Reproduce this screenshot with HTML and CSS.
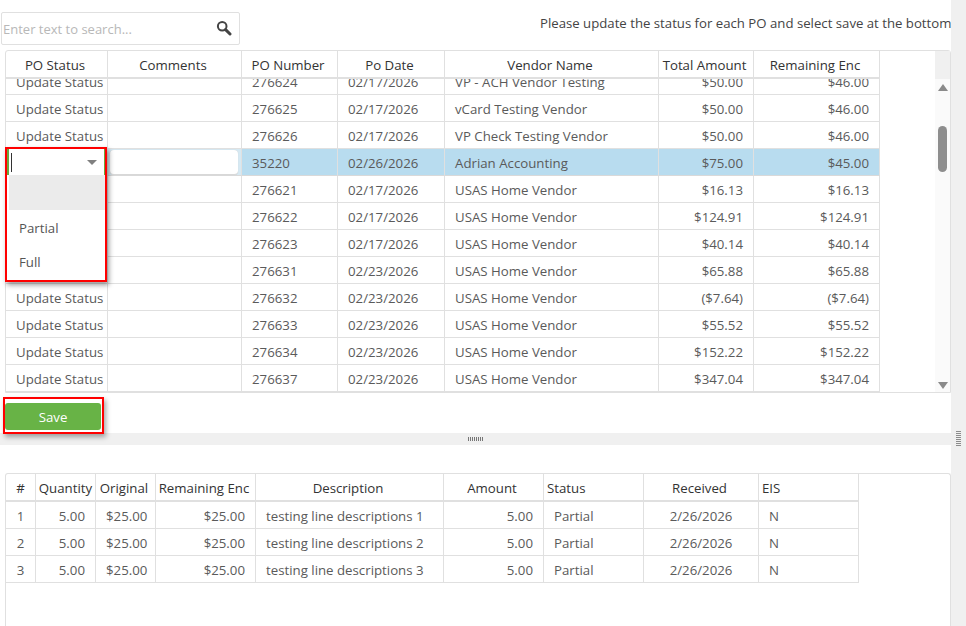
FILE: index.html
```html
<!DOCTYPE html>
<html lang="en">
<head>
<meta charset="utf-8">
<title>PO Status</title>
<link rel="stylesheet" href="styles.css">
</head>
<body>
<div class="page">
  <main class="main">
    <div class="toolbar">
      <div class="search">
        <span class="search-text">Enter text to search...</span>
        <svg class="search-icon" width="16" height="16" viewBox="0 0 16 16"><circle cx="6.2" cy="6.2" r="4.3" fill="none" stroke="#444" stroke-width="2"/><path d="M9.6 9.6 L14 14" stroke="#444" stroke-width="3" stroke-linecap="round"/></svg>
      </div>
      <div class="notice">Please update the status for each PO and select save at the bottom</div>
    </div>

    <div class="grid upper">
      <div class="grid-inner">
        <table class="tbl head po">
          <colgroup><col class="p1"><col class="p2"><col class="p3"><col class="p4"><col class="p5"><col class="p6"><col class="p7"></colgroup>
          <tr><th>PO Status</th><th>Comments</th><th>PO Number</th><th>Po Date</th><th>Vendor Name</th><th>Total Amount</th><th>Remaining Enc</th></tr>
        </table>
        <div class="body-clip">
          <table class="tbl po scrolled">
            <colgroup><col class="p1"><col class="p2"><col class="p3"><col class="p4"><col class="p5"><col class="p6"><col class="p7"></colgroup>
            <tr><td>Update Status</td><td></td><td>276624</td><td>02/17/2026</td><td>VP - ACH Vendor Testing</td><td class="r">$50.00</td><td class="r">$46.00</td></tr>
            <tr><td>Update Status</td><td></td><td>276625</td><td>02/17/2026</td><td>vCard Testing Vendor</td><td class="r">$50.00</td><td class="r">$46.00</td></tr>
            <tr><td>Update Status</td><td></td><td>276626</td><td>02/17/2026</td><td>VP Check Testing Vendor</td><td class="r">$50.00</td><td class="r">$46.00</td></tr>
            <tr class="sel"><td class="edit-cell"></td><td class="edit-cell"><div class="comment-input"></div></td><td>35220</td><td>02/26/2026</td><td>Adrian Accounting</td><td class="r">$75.00</td><td class="r">$45.00</td></tr>
            <tr><td class="covered"></td><td></td><td>276621</td><td>02/17/2026</td><td>USAS Home Vendor</td><td class="r">$16.13</td><td class="r">$16.13</td></tr>
            <tr><td class="covered"></td><td></td><td>276622</td><td>02/17/2026</td><td>USAS Home Vendor</td><td class="r">$124.91</td><td class="r">$124.91</td></tr>
            <tr><td class="covered"></td><td></td><td>276623</td><td>02/17/2026</td><td>USAS Home Vendor</td><td class="r">$40.14</td><td class="r">$40.14</td></tr>
            <tr><td class="covered"></td><td></td><td>276631</td><td>02/23/2026</td><td>USAS Home Vendor</td><td class="r">$65.88</td><td class="r">$65.88</td></tr>
            <tr><td>Update Status</td><td></td><td>276632</td><td>02/23/2026</td><td>USAS Home Vendor</td><td class="r">($7.64)</td><td class="r">($7.64)</td></tr>
            <tr><td>Update Status</td><td></td><td>276633</td><td>02/23/2026</td><td>USAS Home Vendor</td><td class="r">$55.52</td><td class="r">$55.52</td></tr>
            <tr><td>Update Status</td><td></td><td>276634</td><td>02/23/2026</td><td>USAS Home Vendor</td><td class="r">$152.22</td><td class="r">$152.22</td></tr>
            <tr><td>Update Status</td><td></td><td>276637</td><td>02/23/2026</td><td>USAS Home Vendor</td><td class="r">$347.04</td><td class="r">$347.04</td></tr>
          </table>
        </div>
      </div>
      <div class="scrollbar">
        <div class="sb-head"></div>
        <div class="sb-track">
          <span class="arrow-up"></span>
          <span class="thumb"></span>
          <span class="arrow-down"></span>
        </div>
      </div>
      <div class="dropdown">
        <div class="dd-edit"><span class="caret"></span><span class="dd-arrow"></span></div>
        <div class="dd-item dd-blank"></div>
        <div class="dd-item">Partial</div>
        <div class="dd-item">Full</div>
      </div>
    </div>

    <div class="save-row">
      <div class="save-mark"><button class="save" type="button">Save</button></div>
    </div>

    <div class="splitter"><span class="grip"></span></div>

    <div class="grid lower">
      <table class="tbl head line">
        <colgroup><col class="l1"><col class="l2"><col class="l3"><col class="l4"><col class="l5"><col class="l6"><col class="l7"><col class="l8"><col class="l9"></colgroup>
        <tr><th class="q">#</th><th class="q">Quantity</th><th>Original</th><th>Remaining Enc</th><th>Description</th><th>Amount</th><th class="hl">Status</th><th>Received</th><th class="hl">EIS</th></tr>
      </table>
      <table class="tbl line">
        <colgroup><col class="l1"><col class="l2"><col class="l3"><col class="l4"><col class="l5"><col class="l6"><col class="l7"><col class="l8"><col class="l9"></colgroup>
        <tr><td class="c">1</td><td class="r">5.00</td><td class="r">$25.00</td><td class="r">$25.00</td><td>testing line descriptions 1</td><td class="r">5.00</td><td>Partial</td><td class="c">2/26/2026</td><td>N</td></tr>
        <tr><td class="c">2</td><td class="r">5.00</td><td class="r">$25.00</td><td class="r">$25.00</td><td>testing line descriptions 2</td><td class="r">5.00</td><td>Partial</td><td class="c">2/26/2026</td><td>N</td></tr>
        <tr><td class="c">3</td><td class="r">5.00</td><td class="r">$25.00</td><td class="r">$25.00</td><td>testing line descriptions 3</td><td class="r">5.00</td><td>Partial</td><td class="c">2/26/2026</td><td>N</td></tr>
      </table>
    </div>
  </main>
  <aside class="gutter"><span class="gutter-grip"></span></aside>
</div>
</body>
</html>
```
FILE: styles.css
```css
* { box-sizing: border-box; }
html, body { margin: 0; height: 626px; overflow: hidden; background: #fff; }
body { font-family: "Open Sans", "Noto Sans", sans-serif; font-size: 13.25px; color: #5a5a5a; }
.page { display: flex; width: 966px; height: 626px; }
.main { width: 951px; height: 626px; overflow: hidden; display: flex; flex-direction: column; }
.gutter { width: 15px; background: #f0f0f0; display: flex; align-items: flex-start; justify-content: center; padding-top: 431px; }
.gutter-grip { width: 5px; height: 15px; margin-right: 1px; background: repeating-linear-gradient(to bottom, #8c8c8c 0 1px, #f0f0f0 1px 2px); }

.toolbar { height: 50px; display: flex; align-items: flex-start; padding: 12px 0 0 1px; flex: none; }
.search { width: 239px; height: 33px; border: 1px solid #e0e0e0; border-radius: 2px; display: flex; align-items: center; justify-content: space-between; padding: 0 7px 0 1px; }
.search-text { color: #b8b8b8; font-size: 13px; }
.search-icon { display: block; margin-top: -1px; }
.notice { margin-left: auto; white-space: nowrap; color: #444; padding-top: 2px; flex: none; width: 411px; overflow: hidden; font-size: 13.2px; }

.grid { margin-left: 5px; border: 1px solid #e0e0e0; flex: none; position: relative; }
.upper { width: 946px; height: 343px; border-radius: 3px 3px 0 0; display: flex; }
.grid-inner { width: 929px; height: 341px; flex: none; }
.body-clip { height: 313px; overflow: hidden; }
.scrolled { margin-top: -11px; }

.tbl { border-collapse: separate; border-spacing: 0; table-layout: fixed; }
.po { width: 874px; }
.tbl th, .tbl td { border-right: 1px solid #e0e0e0; white-space: nowrap; overflow: hidden; }
.tbl th { height: 28px; font-weight: 400; color: #333; text-align: center; padding: 2px 3px 0 0; border-bottom: 2px solid #e0e0e0; }
.tbl td { height: 27px; padding: 2px 10px 0; border-bottom: 1px solid #e0e0e0; }
.tbl td.r { text-align: right; }
.tbl td.c { text-align: center; padding: 2px 0 0; }
.tbl th.hl { text-align: left; padding-left: 3px; }
.tbl th.q { padding-right: 0; }

.p1 { width: 102px; } .p2 { width: 134px; } .p3 { width: 96px; } .p4 { width: 107px; }
.p5 { width: 214px; } .p6 { width: 95px; } .p7 { width: 126px; }

.sel td { background: #b8dcef; border-bottom-color: #d9d9d9; }
.tbl .sel td.edit-cell { background: #d6e9f3; padding: 0; }
.comment-input { width: 128px; height: 25px; margin-left: 2px; background: #fff; border-radius: 4px; border-bottom: 1px solid #d8d8d8; box-shadow: 0 0 1px #c8c8c8; }

.scrollbar { width: 15px; height: 341px; flex: none; display: flex; flex-direction: column; }
.sb-head { height: 28px; background: #f0f0f0; flex: none; }
.sb-track { flex: 1; background: #fafafa; display: flex; flex-direction: column; align-items: center; padding-top: 5px; }
.arrow-up { width: 0; height: 0; border: 5px solid transparent; border-top: 0; border-bottom: 7px solid #8a8a8a; }
.thumb { width: 9px; height: 46px; background: #8e8e8e; border-radius: 5px; margin-top: 35px; }
.arrow-down { width: 0; height: 0; border: 5px solid transparent; border-bottom: 0; border-top: 7px solid #8a8a8a; margin-top: auto; margin-bottom: 3px; }

.dropdown { position: absolute; left: -1px; top: 96px; width: 102px; height: 135px; border: 2px solid #f00; background: #fff; box-shadow: 2px 3px 5px rgba(0,0,0,.4); }
.dd-edit { height: 26px; border-left: 2px solid #68a83f; border-right: 1px solid #68a83f; position: relative; background: #fff; }
.caret { position: absolute; left: 2px; top: 4px; width: 1px; height: 19px; background: #333; }
.dd-arrow { position: absolute; right: 7px; top: 11px; width: 0; height: 0; border: 5px solid transparent; border-bottom: 0; border-top: 5px solid #808080; }
.dd-item { height: 34px; padding-left: 12px; line-height: 37px; color: #555; }
.dd-blank { height: 35px; background: #ebebeb; margin-left: 2px; }

.save-row { height: 40px; flex: none; padding: 4px 0 0 3px; }
.save-mark { width: 101px; height: 37px; border: 2px solid #f00; padding: 4px 0 0; box-shadow: 2px 3px 5px rgba(0,0,0,.35); background: #fff; position: relative; z-index: 1; }
.save { display: block; width: 96px; height: 27px; background: #68b346; color: #fff; border: 0; border-radius: 3px; font: 13.25px "Open Sans", "Noto Sans", sans-serif; padding: 0; }

.splitter { height: 12px; background: #f0f0f0; flex: none; display: flex; justify-content: center; align-items: center; }
.grip { width: 15px; height: 4px; margin-left: -1px; background: repeating-linear-gradient(to right, #777 0 1px, #f0f0f0 1px 2px); }

.lower { margin-top: 28px; width: 946px; height: 160px; border-bottom: 0; border-radius: 3px 3px 0 0; }
.line { width: 853px; }
.l1 { width: 30px; } .l2 { width: 60px; } .l3 { width: 60px; } .l4 { width: 100px; } .l5 { width: 188px; }
.l6 { width: 100px; } .l7 { width: 100px; } .l8 { width: 115px; } .l9 { width: 100px; }
```
